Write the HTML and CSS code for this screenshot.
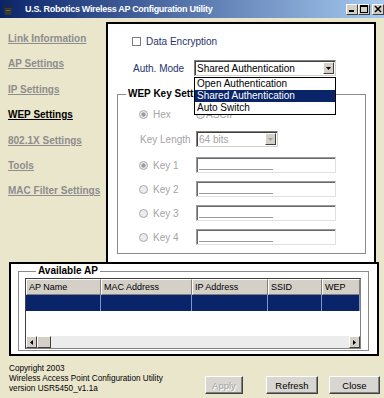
FILE: index.html
```html
<!DOCTYPE html>
<html>
<head>
<meta charset="utf-8">
<link rel="stylesheet" href="styles.css">
</head>
<body>
<div class="window">
  <div class="titlebar">
    <svg class="app-icon" width="10" height="14" viewBox="0 0 10 14">
      <rect x="1" y="1" width="1.5" height="7" fill="#2a2a22"/>
      <rect x="7.5" y="1" width="1.5" height="7" fill="#2a2a22"/>
      <path d="M1 6 L9 6 L8 13 L2 13 Z" fill="#3c3a2c"/>
      <rect x="3" y="8" width="4" height="1" fill="#6a6650"/>
    </svg>
    <span class="title">U.S. Robotics Wireless AP Configuration Utility</span>
    <div class="caption-btns">
      <span class="cbtn"><svg width="8" height="8" viewBox="0 0 8 8"><rect x="1" y="5" width="5" height="2" fill="#000"/></svg></span>
      <span class="cbtn"><svg width="8" height="8" viewBox="0 0 8 8"><rect x="0.5" y="0.5" width="7" height="7" fill="none" stroke="#000"/><rect x="0" y="0" width="8" height="2" fill="#000"/></svg></span>
      <span class="cbtn close"><svg width="8" height="8" viewBox="0 0 8 8"><path d="M1 1 L7 7 M7 1 L1 7" stroke="#000" stroke-width="1.6"/></svg></span>
    </div>
  </div>

  <div class="main">
    <nav class="nav">
      <a>Link Information</a>
      <a>AP Settings</a>
      <a>IP Settings</a>
      <a class="active">WEP Settings</a>
      <a>802.1X Settings</a>
      <a>Tools</a>
      <a>MAC Filter Settings</a>
    </nav>

    <section class="panel">
      <div class="check-row">
        <span class="checkbox"></span>
        <span class="lbl">Data Encryption</span>
      </div>
      <div class="auth-row">
        <span class="lbl auth-label">Auth. Mode</span>
        <div class="combo auth-combo">
          <span class="combo-text">Shared Authentication</span>
          <span class="drop-btn"><svg width="5" height="3" viewBox="0 0 5 3"><path d="M0 0 H5 L2.5 3 Z" fill="#000"/></svg></span>
          <ul class="dropdown">
            <li>Open Authentication</li>
            <li class="hl">Shared Authentication</li>
            <li>Auto Switch</li>
          </ul>
        </div>
      </div>

      <fieldset class="wep">
        <legend>WEP Key Settings</legend>
        <div class="wep-body">
          <div class="row">
            <span class="radio-cell"><span class="radio on"></span><span>Hex</span></span>
            <span class="radio-cell ascii"><span class="radio"></span><span>ASCII</span></span>
          </div>
          <div class="row kl">
            <span class="kl-label">Key Length</span>
            <div class="combo kl-combo">
              <span class="combo-text">64 bits</span>
              <span class="drop-btn"><svg width="5" height="3" viewBox="0 0 5 3"><path d="M0 0 H5 L2.5 3 Z" fill="#a0a0a0"/></svg></span>
            </div>
          </div>
          <div class="row k1">
            <span class="radio-cell"><span class="radio on"></span><span>Key 1</span></span>
            <div class="field"><span class="mask"></span></div>
          </div>
          <div class="row">
            <span class="radio-cell"><span class="radio"></span><span>Key 2</span></span>
            <div class="field"><span class="mask"></span></div>
          </div>
          <div class="row">
            <span class="radio-cell"><span class="radio"></span><span>Key 3</span></span>
            <div class="field"><span class="mask"></span></div>
          </div>
          <div class="row">
            <span class="radio-cell"><span class="radio"></span><span>Key 4</span></span>
            <div class="field"><span class="mask"></span></div>
          </div>
        </div>
      </fieldset>
    </section>
  </div>

  <section class="ap-box">
    <fieldset class="ap-group">
      <legend>Available AP</legend>
      <div class="listview">
        <div class="lv-head">
          <span class="c1">AP Name</span>
          <span class="c2">MAC Address</span>
          <span class="c3">IP Address</span>
          <span class="c4">SSID</span>
          <span class="c5">WEP</span>
        </div>
        <div class="lv-row">
          <span class="c1"></span><span class="c2"></span><span class="c3"></span><span class="c4"></span><span class="c5"></span>
        </div>
        <div class="lv-body"></div>
        <div class="hscroll">
          <span class="sbtn"><svg width="3" height="5" viewBox="0 0 3 5"><path d="M3 0 V5 L0 2.5 Z" fill="#000"/></svg></span>
          <span class="thumb"></span>
          <span class="track"></span>
          <span class="sbtn"><svg width="3" height="5" viewBox="0 0 3 5"><path d="M0 0 V5 L3 2.5 Z" fill="#000"/></svg></span>
        </div>
      </div>
    </fieldset>
  </section>

  <footer class="footer">
    <div class="about">
      <div>Copyright 2003</div>
      <div>Wireless Access Point Configuration Utility</div>
      <div>version USR5450_v1.1a</div>
    </div>
    <div class="buttons">
      <span class="btn apply">Apply</span>
      <span class="btn refresh">Refresh</span>
      <span class="btn closeb">Close</span>
    </div>
  </footer>
</div>
</body>
</html>
```
FILE: styles.css
```css
* { box-sizing: border-box; }
html, body { margin: 0; padding: 0; }
body {
  width: 384px;
  height: 398px;
  overflow: hidden;
  background: #eae6cc;
  font-family: "Liberation Sans", Arial, sans-serif;
  font-size: 10px;
  color: #000;
}
.window { display: flex; flex-direction: column; height: 398px; }

/* title bar */
.titlebar {
  height: 18px;
  flex: none;
  display: flex;
  align-items: center;
  padding: 0 0 0 3px;
  background: linear-gradient(to right, #0a246a 0%, #a6caf0 100%);
}
.app-icon { flex: none; }
.title {
  margin-left: 12px;
  color: #fff;
  font-weight: bold;
  font-size: 9px;
  letter-spacing: -0.3px;
  white-space: nowrap;
}
.caption-btns { margin-left: auto; display: flex; }
.cbtn {
  width: 12px;
  height: 11px;
  background: #d4d0c8;
  border: 1px solid;
  border-color: #fff #404040 #404040 #fff;
  display: flex;
  align-items: center;
  justify-content: center;
}
.cbtn.close { margin-left: 2px; }

/* main */
.main { display: flex; height: 244px; flex: none; }
.nav {
  width: 106px;
  flex: none;
  display: flex;
  flex-direction: column;
  gap: 13.4px;
  padding: 15px 0 0 8px;
}
.nav a {
  font-weight: bold;
  font-size: 10px;
  line-height: 12px;
  color: #8d8d8d;
  text-decoration: underline;
  white-space: nowrap;
}
.nav a.active { color: #000; }

.panel {
  margin-top: 4px;
  width: 270px;
  height: 240px;
  background: #fff;
  border: 2px solid #000;
  border-bottom: 0;
  display: flex;
  flex-direction: column;
  align-items: flex-start;
}
.lbl { color: #27336a; white-space: nowrap; }
.check-row {
  margin: 11px 0 0 24px;
  height: 12px;
  display: flex;
  align-items: center;
  gap: 5px;
}
.checkbox {
  width: 9px;
  height: 9px;
  border: 1px solid #7c7c7c;
  background: #fff;
}
.auth-row {
  margin-top: 13px;
  height: 16px;
  display: flex;
  align-items: center;
  position: relative;
  z-index: 2;
}
.auth-label { margin-left: 25px; width: 61px; }

.combo {
  position: relative;
  height: 16px;
  display: flex;
  align-items: center;
  background: #fff;
  border: 1px solid;
  border-color: #808080 #d4d0c8 #d4d0c8 #808080;
  box-shadow: inset 1px 1px 0 #404040;
}
.combo-text { padding-left: 2px; white-space: nowrap; }
.drop-btn {
  margin-left: auto;
  margin-right: 1px;
  width: 11px;
  height: 12px;
  background: #d4d0c8;
  border: 1px solid;
  border-color: #fff #404040 #404040 #fff;
  display: flex;
  align-items: center;
  justify-content: center;
}
.auth-combo { width: 142px; }
.dropdown {
  position: absolute;
  top: 16px;
  left: -1px;
  width: 142px;
  margin: 0;
  padding: 0;
  list-style: none;
  background: #fff;
  border: 1px solid #000;
}
.dropdown li {
  height: 12px;
  line-height: 12px;
  padding-left: 2px;
  white-space: nowrap;
}
.dropdown li.hl { background: #0a246a; color: #fff; }

/* WEP fieldset */
.wep {
  margin: 12px 0 0 9px;
  width: 249px;
  padding: 0;
  border: 1px solid #8a8a8a;
  min-width: 0;
}
.wep legend, .ap-group legend {
  font-weight: bold;
  font-size: 10px;
  line-height: 12px;
  padding: 0 2px;
  margin-left: 8px;
}
.wep-body {
  padding: 6px 0 8px 21px;
  display: flex;
  flex-direction: column;
  gap: 8px;
  color: #a4a4a4;
}
.row { display: flex; align-items: center; height: 16px; }
.row.kl { margin-top: 1px; }
.row.k1 { margin-top: 2px; }
.radio-cell {
  width: 57px;
  display: flex;
  align-items: center;
  gap: 5px;
  white-space: nowrap;
}
.radio-cell.ascii { gap: 1px; }
.radio {
  width: 9px;
  height: 9px;
  border-radius: 50%;
  border: 1px solid #a8a8a8;
  background: #ececec;
  flex: none;
}
.radio.on { background: radial-gradient(circle, #9a9a9a 0 1.8px, #ececec 2.4px); }
.kl-label { margin-left: 1px; width: 56px; white-space: nowrap; }
.kl-combo { width: 82px; color: #a4a4a4; }
.field {
  width: 140px;
  height: 16px;
  display: flex;
  align-items: flex-end;
  background: #fff;
  border: 1px solid;
  border-color: #9a9a9a #e0e0e0 #e0e0e0 #9a9a9a;
  box-shadow: inset 1px 1px 0 #6a6a6a;
}
.mask {
  margin: 0 0 2px 2px;
  width: 74px;
  height: 1px;
  background: #9a9a9a;
}

/* Available AP */
.ap-box {
  margin-left: 9px;
  width: 370px;
  height: 94px;
  flex: none;
  background: #fff;
  border: 2px solid #000;
  padding-left: 7px;
}
.ap-group {
  margin: 1px 0 0 0;
  width: 351px;
  padding: 1px 0 1px 6px;
  border: 1px solid #8a8a8a;
  min-width: 0;
}
.ap-group legend { margin-left: 11px; }
.listview {
  width: 336px;
  height: 71px;
  border: 1px solid #808080;
  display: flex;
  flex-direction: column;
  border-top-color: #404040;
  border-left-color: #404040;
}
.lv-head, .lv-row { display: flex; height: 16px; flex: none; }
.lv-head span {
  background: #d4d0c8;
  border: 1px solid;
  border-color: #fff #808080 #808080 #fff;
  font-size: 9px;
  line-height: 14px;
  padding-left: 2px;
  white-space: nowrap;
  overflow: hidden;
}
.c1 { width: 75px; }
.c2 { width: 91px; }
.c3 { width: 76px; }
.c4 { width: 54px; }
.c5 { width: 38px; }
.lv-row { background: #0a246a; }
.lv-row span { border-right: 1px solid #8395c6; }
.lv-body { flex: 1; background: #fff; }
.hscroll {
  height: 12px;
  flex: none;
  display: flex;
  background: #ececec;
}
.sbtn {
  width: 11px;
  height: 12px;
  background: #d4d0c8;
  border: 1px solid;
  border-color: #fff #404040 #404040 #fff;
  display: flex;
  align-items: center;
  justify-content: center;
}
.thumb {
  width: 14px;
  height: 12px;
  background: #d4d0c8;
  border: 1px solid;
  border-color: #fff #404040 #404040 #fff;
}
.track { flex: 1; }

/* footer */
.footer {
  flex: 1;
  display: flex;
  padding: 8px 4px 0 9px;
}
.about {
  font-size: 8.2px;
  line-height: 10px;
  white-space: nowrap;
}
.buttons {
  margin-left: auto;
  margin-top: 12px;
  display: flex;
}
.btn {
  height: 18px;
  display: flex;
  align-items: center;
  justify-content: center;
  font-size: 9.5px;
  background: #d8d6d0;
  border: 1px solid;
  border-color: #fff #404040 #404040 #fff;
  box-shadow: inset -1px -1px 0 #808080;
}
.apply { width: 38px; color: #a2a2a2; text-shadow: 1px 1px 0 #fff; }
.refresh { width: 52px; margin-left: 23px; }
.closeb { width: 51px; margin-left: 11px; }
```
